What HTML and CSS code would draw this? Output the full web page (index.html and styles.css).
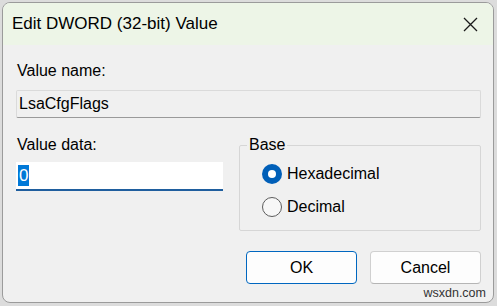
FILE: index.html
```html
<!DOCTYPE html>
<html lang="en">
<head>
    <meta charset="UTF-8" />
    <meta name="viewport" content="width=device-width, initial-scale=1.0"/>
    <title>Edit DWORD (32-bit) Value</title>
    <link rel="stylesheet" href="styles.css">
</head>
<body>
    <div class="dialog">
        <div class="titlebar">
            <span class="title">Edit DWORD (32-bit) Value</span>
            <button class="close" aria-label="Close">
                <svg width="15" height="15" viewBox="0 0 15 15">
                    <path d="M1 1 L14 14 M14 1 L1 14" stroke="#1a1a1a" stroke-width="1.3" fill="none"/>
                </svg>
            </button>
        </div>

        <div class="content">
            <div class="label">Value name:</div>
            <div class="namebox">LsaCfgFlags</div>

            <div class="row">
                <div class="datacol">
                    <div class="label">Value data:</div>
                    <div class="databox"><span class="sel">0</span></div>
                </div>

                <fieldset class="base">
                    <legend>Base</legend>
                    <div class="radio"><span class="dot on"></span>Hexadecimal</div>
                    <div class="radio"><span class="dot"></span>Decimal</div>
                </fieldset>
            </div>

            <div class="buttons">
                <button class="btn primary">OK</button>
                <button class="btn">Cancel</button>
            </div>
        </div>

        <div class="watermark">wsxdn.com</div>
    </div>
</body>
</html>
```

FILE: styles.css
```css
body {
    margin: 0;
    padding: 0;
    background-color: #dcdcdc;
    font-family: "Liberation Sans", Arial, sans-serif;
    color: #000;
}

.dialog {
    position: relative;
    width: 490px;
    height: 299px;
    margin: 2px 0 0 2px;
    border: 1px solid #9b9b9b;
    border-radius: 8px;
    background-color: #f0f0f0;
    overflow: hidden;
}

.titlebar {
    height: 42px;
    display: flex;
    align-items: center;
    justify-content: space-between;
    background-color: #edf5e7;
    padding-left: 9px;
}

.title {
    font-size: 17px;
}

.close {
    width: 46px;
    height: 42px;
    border: none;
    background: transparent;
    display: flex;
    align-items: center;
    justify-content: center;
    padding: 0;
}

.content {
    padding: 17px 12px 0 13px;
}

.label {
    font-size: 16px;
    line-height: 18px;
    padding-left: 1px;
}

.namebox {
    margin-top: 10px;
    height: 26px;
    line-height: 26px;
    padding-left: 2px;
    font-size: 16px;
    border: 1px solid #dadada;
    border-bottom-color: #9a9a9a;
    border-radius: 2px;
}

.row {
    display: flex;
    margin-top: 18px;
    gap: 16px;
}

.datacol {
    width: 207px;
}

.databox {
    margin-top: 8px;
    height: 27px;
    background-color: #fff;
    border-bottom: 2px solid #1f5e9e;
    display: flex;
    align-items: center;
    padding-left: 2px;
}

.sel {
    background-color: #0078d7;
    color: #fff;
    font-size: 17px;
    line-height: 21px;
    padding: 0 1px;
}

.base {
    margin: 0;
    width: 242px;
    height: 95px;
    box-sizing: border-box;
    padding: 10px 0 0 0;
    border: 1px solid #d6d6d6;
    border-radius: 2px;
}

.base legend {
    font-size: 16px;
    line-height: 18px;
    padding: 0 2px;
    margin-left: 7px;
}

.radio {
    display: flex;
    align-items: center;
    gap: 5px;
    font-size: 16px;
    height: 20px;
    margin-bottom: 13px;
    padding-left: 22px;
}

.dot {
    width: 18px;
    height: 18px;
    border: 1px solid #5c5c5c;
    border-radius: 50%;
    background-color: #f7f7f7;
    display: flex;
    align-items: center;
    justify-content: center;
}

.dot.on {
    width: 20px;
    height: 20px;
    border: none;
    background-color: #005fb8;
}

.dot.on::after {
    content: "";
    width: 8px;
    height: 8px;
    border-radius: 50%;
    background-color: #fff;
}

.buttons {
    display: flex;
    justify-content: flex-end;
    gap: 13px;
    margin-top: 20px;
}

.btn {
    width: 111px;
    height: 33px;
    font-family: "Liberation Sans", Arial, sans-serif;
    font-size: 16px;
    color: #000;
    background-color: #fdfdfd;
    border: 1px solid #d0d0d0;
    border-bottom-color: #b5b5b5;
    border-radius: 4px;
}

.btn.primary {
    border-color: #0067c0;
}

.watermark {
    position: absolute;
    right: 7px;
    bottom: 2px;
    font-size: 12.5px;
    color: #333;
}
```
